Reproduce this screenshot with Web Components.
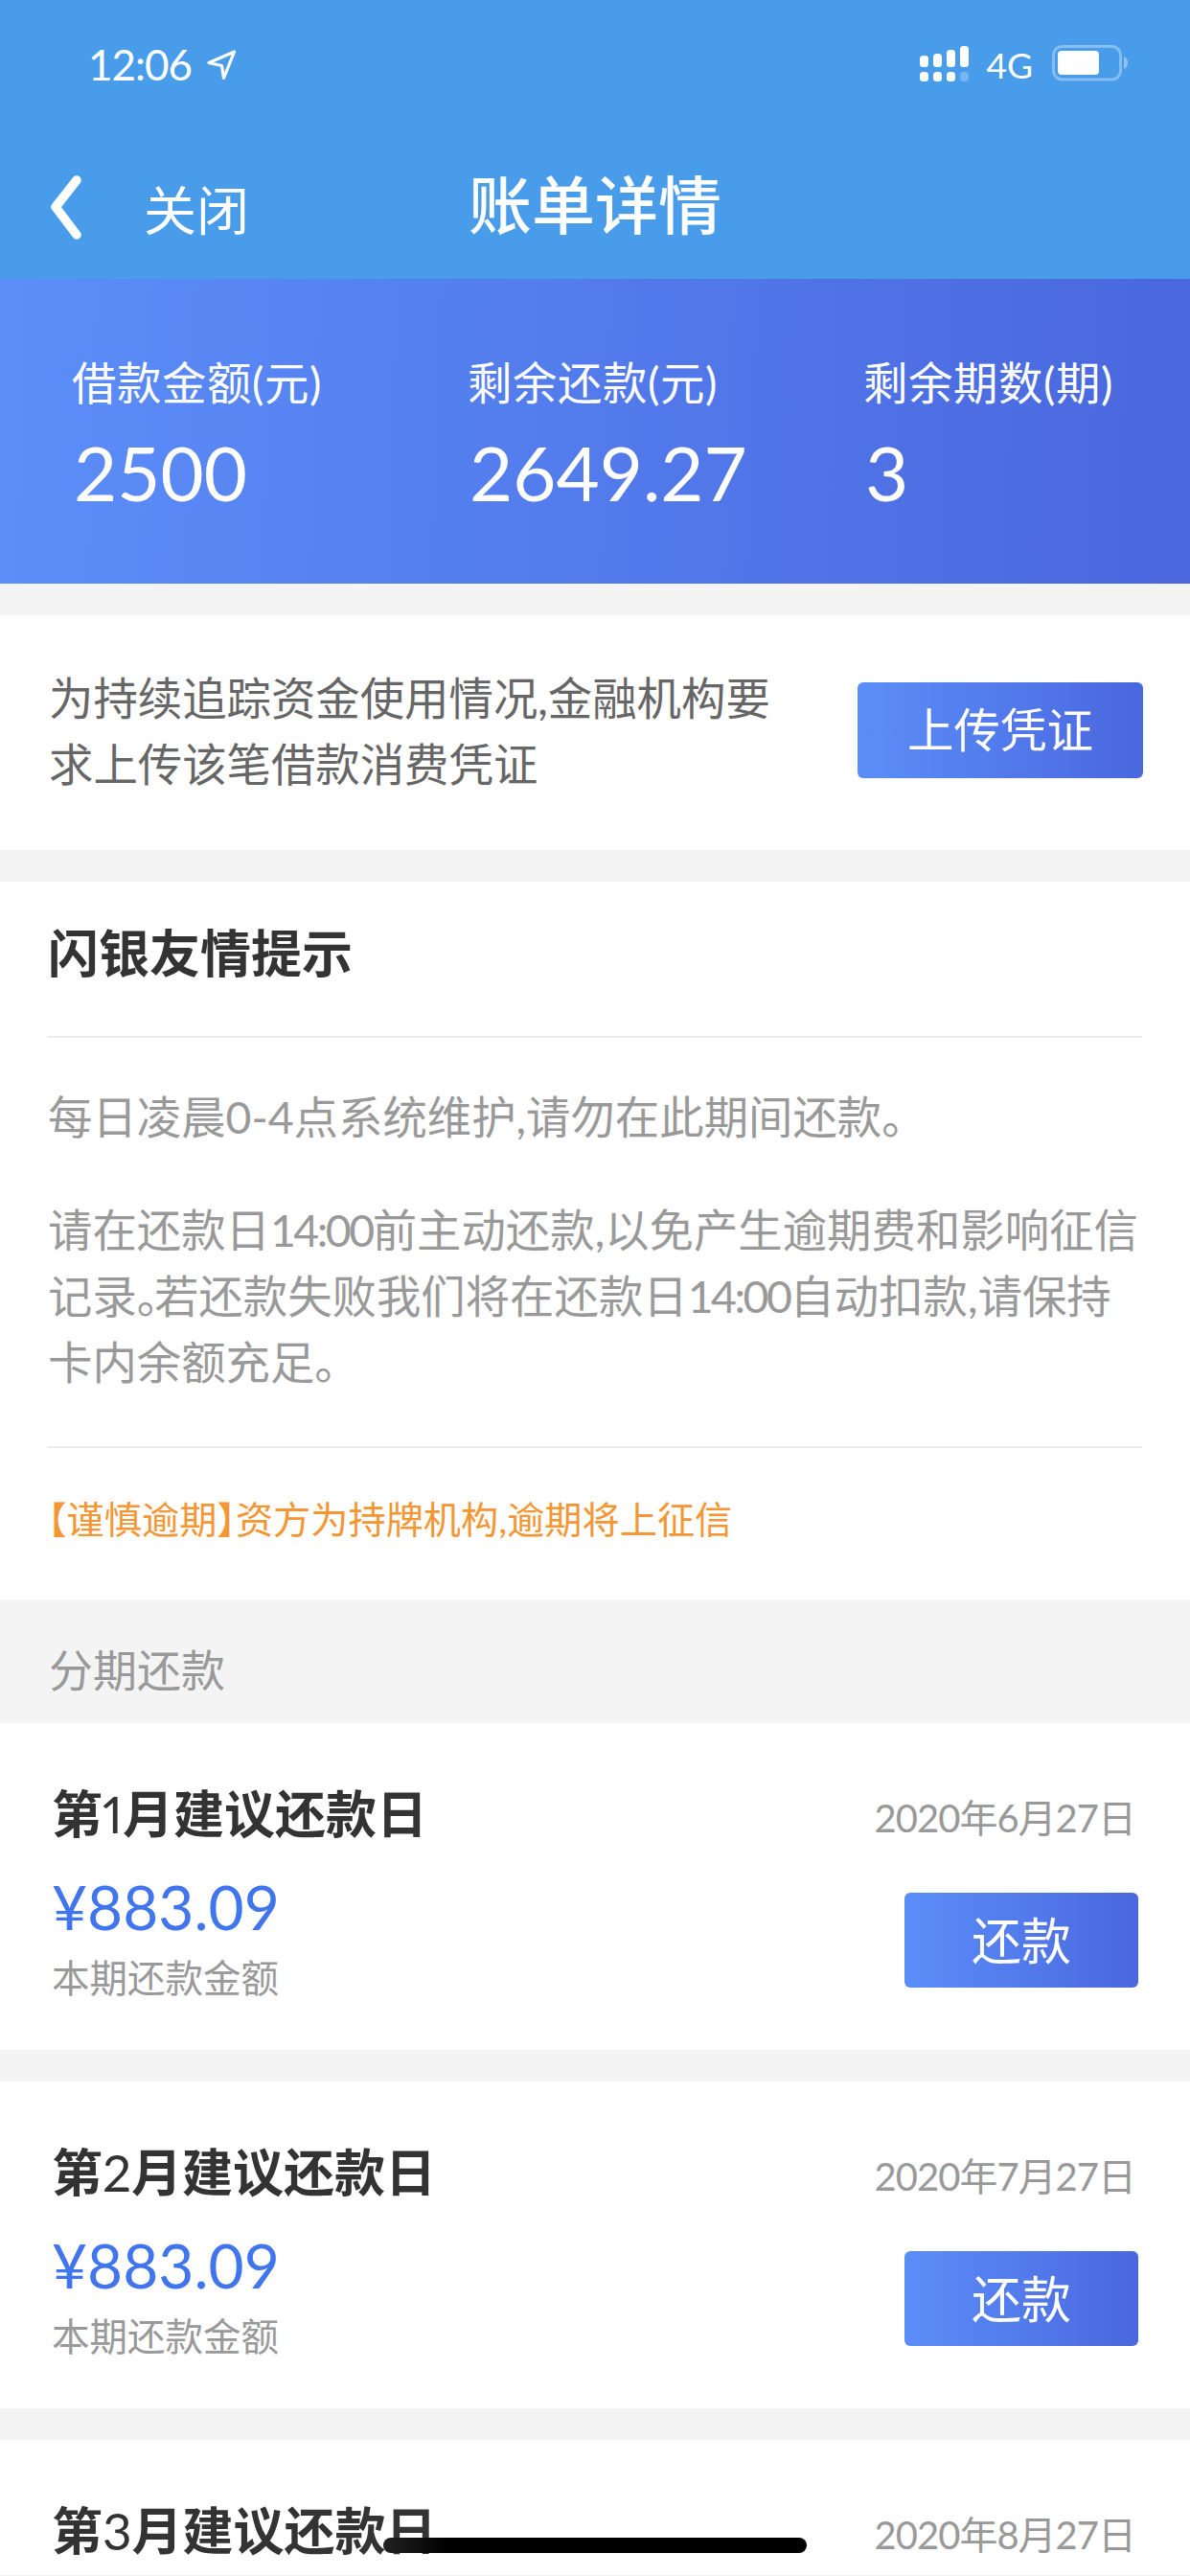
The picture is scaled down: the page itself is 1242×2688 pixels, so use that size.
<!DOCTYPE html>
<html lang="zh-CN"><head><meta charset="utf-8"><title>账单详情</title>
<style>
html{height:2688px;overflow:hidden}
html,body{margin:0;padding:0;background:#f4f4f4}
body{width:1242px;height:2688px;overflow:hidden;position:relative;font-family:Lato,"Noto Sans CJK SC",sans-serif}
</style></head><body>
<bill-header></bill-header>
<stat-band>
  <stat-cell label="借款金额(元)" value="2500"></stat-cell>
  <stat-cell label="剩余还款(元)" value="2649.27"></stat-cell>
  <stat-cell label="剩余期数(期)" value="3"></stat-cell>
</stat-band>
<voucher-card><div>为持续追踪资金使用情况,金融机构要</div><div>求上传该笔借款消费凭证</div></voucher-card>
<tips-card></tips-card>
<section-label>分期还款</section-label>
<repay-card n="1" date="2020年6月27日"></repay-card>
<repay-card n="2" date="2020年7月27日"></repay-card>
<repay-card n="3" date="2020年8月27日" partial></repay-card>
<home-indicator></home-indicator>
<script>
const FONT='Lato,"Noto Sans CJK SC",sans-serif';
function def(name,html){
  customElements.define(name,class extends HTMLElement{
    connectedCallback(){
      if(this.shadowRoot)return;
      const r=this.attachShadow({mode:'open'});
      r.innerHTML=typeof html==='function'?html(this):html;
    }
  });
}
def('grad-button',el=>`<style>
:host{display:flex;align-items:center;justify-content:center;box-sizing:border-box;border-radius:6px;color:#fff;
background:linear-gradient(90deg,#5b8ef9,#4a67de);font:400 var(--fs,48.5px)/1 ${FONT}}
</style><slot></slot>`);
def('bill-header',`<style>
:host{display:block;height:291px;background:#489cea;color:#fff;font-family:${FONT}}
.status{height:130px;display:flex;align-items:flex-start;padding:0 64px 0 92px;box-sizing:border-box}
.time{font:400 44px/44px Lato;margin-top:45px;letter-spacing:-1px}
.loc{margin:50px 0 0 14px}
.sp{flex:1}
.sig{margin-top:46px}
.net{font:400 37px/40px Lato;margin:48px 20px 0 18px}
.bat{margin-top:47px}
.nav{display:grid;grid-template-columns:1fr auto 1fr;align-items:center;height:100px;margin-top:37px}
.l{display:flex;align-items:center}
.back{margin-left:50px}
.close{font:400 55px/1 "Noto Sans CJK SC";margin:0 0 2px 64px}
.title{font:500 66px/1 "Noto Sans CJK SC";margin-bottom:14px}
</style>
<div class="status"><span class="time">12:06</span>
<svg class="loc" width="34" height="36" viewBox="216 50 34 36"><path d="M246.5 54 220 65.500l13.500 3 2 13z" fill="none" stroke="#fff" stroke-width="3.200" stroke-linejoin="round"/></svg>
<span class="sp"></span>
<svg class="sig" width="54" height="40" viewBox="956 46 54 40" fill="#fff">
<rect x="958" y="58" width="9" height="12" rx="3.500"/><rect x="972" y="56" width="9" height="14" rx="3.500"/><rect x="986" y="52" width="9" height="18" rx="3.500"/><rect x="1000" y="48" width="9" height="22" rx="3.500"/>
<rect x="958" y="75" width="9" height="10" rx="3.500"/><rect x="972" y="75" width="9" height="10" rx="3.500"/><rect x="986" y="75" width="9" height="10" rx="3.500"/><rect x="1000" y="75" width="9" height="10" rx="3.500" opacity=".25"/></svg>
<span class="net">4G</span>
<svg class="bat" width="80" height="38" viewBox="1098 49 80 38"><rect x="1099.500" y="50.500" width="70" height="34.500" rx="9" fill="none" stroke="#fff" stroke-opacity=".35" stroke-width="3"/><rect x="1104" y="55" width="43" height="25" rx="4" fill="#fff"/><path d="M1173 61c3 1 4 4 4 6.500s-1 5.500-4 6.500z" fill="#fff" fill-opacity=".4"/></svg>
</div>
<div class="nav"><div class="l">
<svg class="back" width="36" height="72" viewBox="50 182 36 72"><path d="M80 189 58 217l22 29" fill="none" stroke="#fff" stroke-width="9.500" stroke-linecap="round" stroke-linejoin="round"/></svg>
<span class="close">关闭</span></div>
<div class="title">账单详情</div><div></div></div>`);
def('stat-band',`<style>
:host{display:grid;grid-template-columns:413px 413px 1fr;height:318px;box-sizing:border-box;padding:80px 0 0 75px;
background:linear-gradient(92deg,#5b8ef9,#4a67de)}
</style><slot></slot>`);
def('stat-cell',el=>`<style>
:host{display:block;color:#fff}
.l{font:400 46.400px/56px ${FONT};white-space:nowrap;letter-spacing:.6px}
.v{font:400 78px/90px ${FONT};margin-top:21px;margin-left:2px}
</style><div class="l">${el.getAttribute('label')}</div><div class="v">${el.getAttribute('value')}</div>`);
def('voucher-card',`<style>
:host{display:flex;align-items:center;justify-content:space-between;height:245px;margin-top:33px;background:#fff;padding:0 49px 0 51px}
.t{font:400 46.400px/69px ${FONT};color:#666;white-space:nowrap;margin-top:-3px}
grad-button{width:298px;height:100px;margin-top:-6px}
</style><div class="t"><slot></slot></div><grad-button>上传凭证</grad-button>`);
def('tips-card',`<style>
:host{display:block;margin-top:33px;height:749px;box-sizing:border-box;background:#fff;padding:0 50px}
h2{margin:0;height:163px;box-sizing:border-box;border-bottom:2px solid #ececec;font:700 53px/150px ${FONT};color:#333}
.m{border-bottom:2px solid #ececec;color:#999;font:400 46.400px/69px ${FONT};font-feature-settings:"halt";padding:48px 0 53px;white-space:nowrap}
p{margin:0}
p+p{margin-top:49px}
.e{letter-spacing:-5px}
.n{letter-spacing:-2.500px}
.w{color:#f39633;font:400 39.200px/1 ${FONT};font-feature-settings:"halt";padding-top:54px;white-space:nowrap}
</style><h2>闪银友情提示</h2><div class="m"><p><span>每日凌晨0-4点系统维护,请勿在此期间还款。</span></p><p><div>请在还款日<span class="n">14:00</span>前主动还款,以免产生逾期费和影响征信</div><div>记录<span class="e">。</span>若还款失败我们将在还款日<span class="n">14:00</span>自动扣款,请保持</div><div>卡内余额充足。</div></p></div><div class="w">【谨慎逾期】资方为持牌机构,逾期将上征信</div>`);
def('section-label',`<style>
:host{display:flex;align-items:center;height:129px;box-sizing:border-box;padding:18px 0 0 51px;color:#999;font:400 46px/1 ${FONT}}
</style><slot></slot>`);
def('repay-card',el=>{
const n=el.getAttribute('n');
const partial=el.hasAttribute('partial');
return `<style>
:host{display:grid;grid-template-columns:1fr auto;height:${partial?141:341}px;box-sizing:border-box;margin-bottom:${partial?0:33}px;padding:60px 54px 0 54px;background:#fff;align-content:start}
.t{font:700 53px/70px ${FONT};color:#333;white-space:nowrap}
.t span{font-weight:400;font-variant-numeric:proportional-nums}
.d{font:400 40px/70px ${FONT};color:#999;margin:4px 3px 0 0;white-space:nowrap;justify-self:end;letter-spacing:-1px}
.a{font:400 64px/90px ${FONT};color:#4175ee;margin-top:13px}
.s{font:400 39.500px/56px ${FONT};color:#999;margin-top:1px}
grad-button{--fs:52px;width:244px;height:99px;margin-top:43px;justify-self:end}
</style><div class="t">第<span>${n}</span>月建议还款日</div><div class="d">${el.getAttribute('date')}</div>
${partial?'':`<div><div class="a">¥883.09</div><div class="s">本期还款金额</div></div><grad-button>还款</grad-button>`}`;});
def('home-indicator',`<style>
:host{display:block;position:absolute;left:400px;top:2648px;width:442px;height:16px;border-radius:8px;background:linear-gradient(90deg,#222,#000 15%)}
</style>`);
</script></body></html>
